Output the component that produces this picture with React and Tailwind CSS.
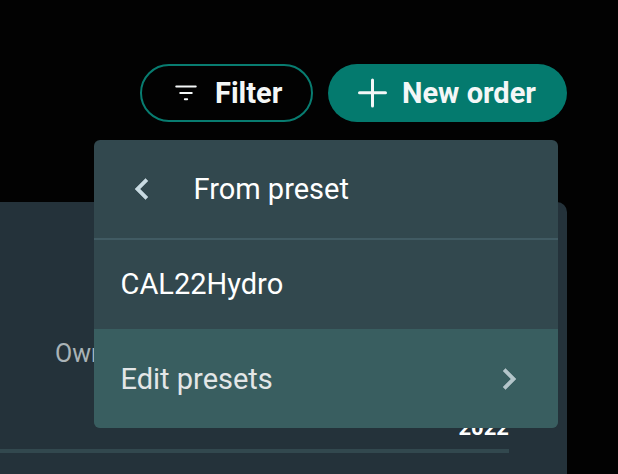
function FilterIcon() {
    return (
        <svg className="w-6 h-6 shrink-0" viewBox="0 0 24 24" fill="none" stroke="currentColor" strokeWidth="1.9" strokeLinecap="round">
            <path d="M2.2 5.5h19.6M6.2 12h11.6M10.8 18.2h2.4" />
        </svg>
    );
}

function PlusIcon() {
    return (
        <svg className="w-8 h-8 shrink-0" viewBox="0 0 32 32" fill="none" stroke="currentColor" strokeWidth="3" strokeLinecap="round">
            <path d="M15.5 3v26M2.5 15.8h26" />
        </svg>
    );
}

function ChevronLeft() {
    return (
        <svg className="size-[42px] shrink-0 text-[#c9dbe2]" viewBox="0 0 24 24" fill="currentColor" stroke="currentColor" strokeWidth="0.3">
            <path d="M15.41 7.41 14 6l-6 6 6 6 1.41-1.41L10.83 12z" />
        </svg>
    );
}

function ChevronRight() {
    return (
        <svg className="size-[42px] shrink-0 text-[#b4c5ca]" viewBox="0 0 24 24" fill="currentColor" stroke="currentColor" strokeWidth="0.3">
            <path d="M10 6 8.59 7.41 13.17 12l-4.58 4.59L10 18l6-6z" />
        </svg>
    );
}

function PresetMenu() {
    return (
        <div className="absolute left-[93.5px] top-[140px] w-[464.5px] h-72 flex flex-col rounded-md overflow-hidden bg-[#32484e] text-[29px] leading-none text-white">
            <button className="h-[100px] shrink-0 flex items-center pl-[27.5px] border-b-2 border-[#415b63]">
                <ChevronLeft />
                <span className="ml-[30.5px]">From preset</span>
            </button>
            <button className="h-[89px] shrink-0 flex items-center pl-[27px]">CAL22Hydro</button>
            <button className="flex-1 flex items-center justify-between pl-[27px] pr-7 bg-[#395e60] text-[#e3e6e7]">
                <span className="pt-0.5">Edit presets</span>
                <ChevronRight />
            </button>
        </div>
    );
}

function App() {
    return (
        <div className="relative h-screen overflow-hidden flex flex-col bg-[#020202] font-['Roboto',sans-serif]">
            <header className="flex justify-end gap-[15px] pt-16 pr-[51px] text-[29px] leading-none font-bold text-[#f4f7f7]">
                <button className="w-[172.5px] h-[58px] flex items-center pl-8 gap-[17px] rounded-full border-2 border-[#087c70]">
                    <FilterIcon />
                    Filter
                </button>
                <button className="w-[239.5px] h-[58px] flex items-center pl-[29.5px] gap-[13px] rounded-full bg-[#047a6e] whitespace-nowrap">
                    <PlusIcon />
                    New order
                </button>
            </header>

            <main className="mt-20 mr-[51px] flex-1 flex flex-col rounded-tr-[10px] bg-[#24323a]">
                <div className="pt-[140px] pl-[55px] text-[25px] leading-6 text-[#a9b3b7]">Owned</div>
                <div className="mt-[51px] mr-[58px] h-9 border-b-4 border-[#32484e] text-right text-[22px] leading-[22px] font-bold text-white">
                    2022
                </div>
            </main>

            <PresetMenu />
        </div>
    );
}

export default App;
